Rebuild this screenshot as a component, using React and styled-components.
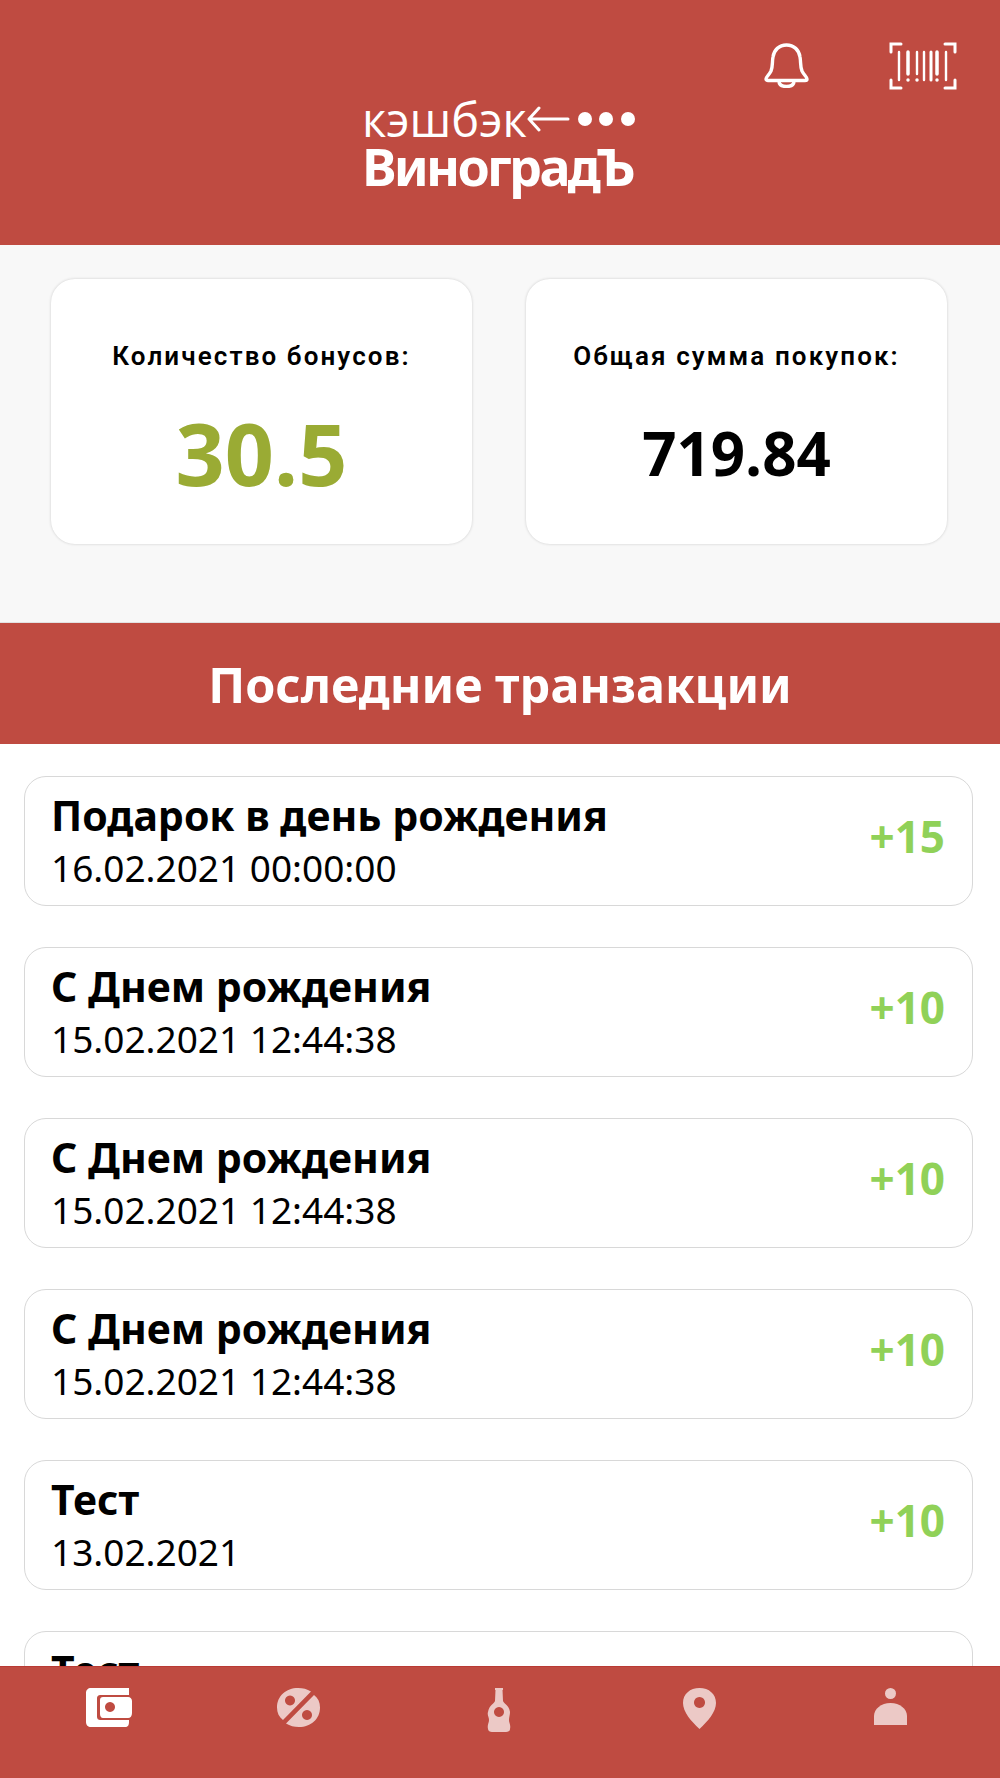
import React from "react";
import styled, { createGlobalStyle } from "styled-components";

const Global = createGlobalStyle`
  html, body { margin: 0; padding: 0; background: #fff; }
  * { box-sizing: border-box; }
`;

const Page = styled.div`
  width: 1000px;
  height: 1778px;
  display: flex;
  flex-direction: column;
  overflow: hidden;
  font-family: "Noto Sans", "Open Sans", sans-serif;
  color: #000;
`;

const Header = styled.header`
  height: 245px;
  flex: none;
  background: #bf4b41;
  display: flex;
  flex-direction: column;
`;

const HeaderActions = styled.div`
  display: flex;
  align-items: center;
  padding: 41px 43px 0 0;
  justify-content: flex-end;
  gap: 79px;
  height: 90px;
`;

const Logo = styled.div`
  width: 272px;
  margin: 9px 0 0 362px;
  color: #fff;
  display: flex;
  flex-direction: column;
`;

const LogoTop = styled.div`
  display: flex;
  align-items: center;
  height: 40px;
`;

const LogoThin = styled.span`
  font-family: "Open Sans", sans-serif;
  font-weight: 400;
  font-size: 47px;
  line-height: 40px;
`;

const ArrowSvg = styled.svg`
  flex: none;
  margin-left: 0;
`;

const LogoBold = styled.span`
  font-family: "Noto Sans", sans-serif;
  font-weight: 700;
  font-size: 52px;
  line-height: 54px;
  letter-spacing: -2.7px;
  white-space: nowrap;
`;

const Stats = styled.section`
  height: 378px;
  flex: none;
  background: #f8f8f8;
  padding: 34px 53px 0 51px;
  display: grid;
  grid-template-columns: 421px 421px;
  justify-content: space-between;
  align-items: start;
  border-bottom: 1px solid #e2e2e2;
`;

const StatCard = styled.div`
  height: 265px;
  background: #fff;
  border-radius: 24px;
  box-shadow: 0 0 3px rgba(0, 0, 0, 0.18);
  display: flex;
  flex-direction: column;
  align-items: center;
`;

const StatLabel = styled.div`
  font-family: "Roboto", sans-serif;
  font-weight: 600;
  font-size: 26px;
  letter-spacing: 2.1px;
  line-height: 30px;
  margin-top: 62px;
`;

const StatValue = styled.div`
  font-family: "Open Sans", sans-serif;
  font-weight: 700;
  line-height: 100px;
  margin-top: 32px;
  font-size: ${(p) => p.$size}px;
  color: ${(p) => p.$color};
`;

const Banner = styled.h2`
  height: 121px;
  flex: none;
  margin: 0;
  background: #bf4b41;
  color: #fff;
  display: flex;
  align-items: center;
  justify-content: center;
  font-family: "Noto Sans", sans-serif;
  font-weight: 700;
  font-size: 48.500px;
`;

const List = styled.main`
  flex: 1;
  min-height: 0;
  overflow: hidden;
  padding: 32px 27px 0 24px;
  display: flex;
  flex-direction: column;
  gap: 41px;
`;

const Row = styled.article`
  flex: none;
  height: 130px;
  border: 1px solid #d8d8d8;
  border-radius: 22px;
  background: #fff;
  padding: 0 27px 0 26px;
  display: flex;
  align-items: center;
  justify-content: space-between;
`;

const RowText = styled.div`
  display: flex;
  flex-direction: column;
  padding-top: 3px;
`;

const RowTitle = styled.div`
  font-weight: 700;
  font-size: 41px;
  line-height: 50px;
`;

const RowDate = styled.div`
  font-weight: 400;
  font-size: 37px;
  line-height: 56px;
`;

const Amount = styled.div`
  font-weight: 700;
  font-size: 44px;
  color: #90d158;
  margin-bottom: 10px;
`;

const Nav = styled.nav`
  height: 112px;
  flex: none;
  background: #bf4b41;
  border-top: 1px solid #b93a34;
  padding: 21px 0 0 14px;
  display: grid;
  grid-template-columns: 190px 188px 214px 186px 196px;
  align-items: start;
  justify-items: center;
`;

const NavIcon = styled.svg`
  display: block;
  fill: #fff;
  opacity: ${(p) => (p.$active ? 1 : 0.7)};
`;

const Bell = () => (
  <svg width="47" height="45" viewBox="0 0 47 45" fill="none" stroke="#fff" strokeWidth="3.4" strokeLinejoin="round" strokeLinecap="round">
    <path d="M3 36 c0 -2 3 -4 5 -8 c2 -5 1 -9 2 -14 c1 -7 6 -12 13.500 -12 s12.500 5 13.500 12 c1 5 0 9 2 14 c2 4 5 6 5 8 c0 1 -1 1.500 -2 1.500 h-37 c-1 0 -2 -.5 -2 -1.500z" />
    <path d="M16 38 c0 4 3.500 5.500 7.500 5.500 s7.500 -1.500 7.500 -5.500" />
  </svg>
);

const Scanner = () => (
  <svg width="68" height="50" viewBox="0 0 68 50" fill="none" stroke="#fff" strokeLinecap="round">
    <g strokeWidth="3">
      <path d="M2 11 V3 H12" />
      <path d="M56 3 H66 V11" />
      <path d="M2 39 V47 H12" />
      <path d="M56 47 H66 V39" />
    </g>
    <g strokeWidth="2.400">
      <path d="M10 11 V39" />
      <path d="M19 11 V33" strokeWidth="3.500" />
      <path d="M19 39 V39.100" strokeWidth="3.500" />
      <path d="M28 11 V33" />
      <path d="M28 39 V39.100" strokeWidth="3.500" />
      <path d="M35 11 V39" />
      <path d="M42 11 V39" strokeWidth="3" />
      <path d="M48 11 V33" strokeWidth="3.500" />
      <path d="M48 39 V39.100" strokeWidth="3.500" />
      <path d="M57 11 V39" />
    </g>
  </svg>
);

const ArrowDots = () => (
  <ArrowSvg width="109" height="30" viewBox="0 0 109 30" fill="none" stroke="#fff" strokeWidth="3" strokeLinecap="round" strokeLinejoin="round">
    <path d="M12 4 L2 15 L12 26 M2 15 H41" />
    <g fill="#fff" stroke="none">
      <circle cx="58" cy="15" r="7" />
      <circle cx="79" cy="15" r="7" />
      <circle cx="101" cy="15" r="7" />
    </g>
  </ArrowSvg>
);

const WalletIcon = () => (
  <NavIcon $active width="46" height="39" viewBox="0 0 46 39">
    <path fillRule="evenodd" d="M5 0 H43 V7 H15 C12 7 11 8 11 11 V28 C11 31 12 32 15 32 H43 V34 C43 37 42 39 39 39 H5 C2 39 0 37 0 34 V5 C0 2 2 0 5 0 Z M17 9 H42 C44.500 9 46 11 46 13 V25 C46 28 44.500 30 42 30 H17 C15 30 14 28 14 26 V12 C14 10 15 9 17 9 Z M24 14 a5 5 0 1 0 0.010 0 Z" />
  </NavIcon>
);

const PercentIcon = () => (
  <NavIcon width="43" height="39" viewBox="0 0 43 39">
    <path fillRule="evenodd" d="M21 0 C26 0 30 1 34 3.500 L6 32 C2 29 0 25 0 19.500 C0 8 9 0 21 0 Z M13 7.500 a5 5 0 1 0 0.010 0 Z" />
    <path fillRule="evenodd" d="M37 7 C41 10 43 14 43 19.500 C43 31 34 39 22 39 C17 39 13 38 9 35.500 Z M30 22 a5 5 0 1 0 0.010 0 Z" />
  </NavIcon>
);

const BottleIcon = () => (
  <NavIcon width="24" height="44" viewBox="0 0 24 44">
    <path fillRule="evenodd" d="M8 0 H16 V2 H15.500 L16 13 C17 16 22 17 23 24 C23 27 22 29 22 32 C22 35 24 37 23 41 C23 43 21 44 19 44 H5 C3 44 1 43 1 41 C0 37 2 35 2 32 C2 29 0 27 1 24 C2 17 7 16 8 13 L8.500 2 H8 Z M12 19 a5 5 0 1 0 0.010 0 Z" />
  </NavIcon>
);

const PinIcon = () => (
  <NavIcon width="33" height="41" viewBox="0 0 33 41">
    <path fillRule="evenodd" d="M16.500 0 C26 0 33 6 33 15 C33 24 25 33 16.500 41 C8 33 0 24 0 15 C0 6 7 0 16.500 0 Z M16.500 9 a5.500 5.500 0 1 0 0.010 0 Z" />
  </NavIcon>
);

const PersonIcon = () => (
  <NavIcon width="33" height="37" viewBox="0 0 33 37">
    <ellipse cx="16.500" cy="5.500" rx="5.500" ry="5.500" />
    <path d="M0 37 V28 C0 21 7 15 16.500 15 C26 15 33 21 33 28 V37 Z" />
  </NavIcon>
);

const rows = [
  { title: "Подарок в день рождения", date: "16.02.2021 00:00:00", amount: "+15" },
  { title: "С Днем рождения", date: "15.02.2021 12:44:38", amount: "+10" },
  { title: "С Днем рождения", date: "15.02.2021 12:44:38", amount: "+10" },
  { title: "С Днем рождения", date: "15.02.2021 12:44:38", amount: "+10" },
  { title: "Тест", date: "13.02.2021", amount: "+10" },
  { title: "Тест", date: "13.02.2021", amount: "+10" },
];

export default function App() {
  return (
    <Page>
      <Global />
      <Header>
        <HeaderActions>
          <Bell />
          <Scanner />
        </HeaderActions>
        <Logo>
          <LogoTop>
            <LogoThin>кэшбэк</LogoThin>
            <ArrowDots />
          </LogoTop>
          <LogoBold>ВиноградЪ</LogoBold>
        </Logo>
      </Header>
      <Stats>
        <StatCard>
          <StatLabel>Количество бонусов:</StatLabel>
          <StatValue $size={86} $color="#9aab34">30.5</StatValue>
        </StatCard>
        <StatCard>
          <StatLabel>Общая сумма покупок:</StatLabel>
          <StatValue $size={60} $color="#000">719.84</StatValue>
        </StatCard>
      </Stats>
      <Banner>Последние транзакции</Banner>
      <List>
        {rows.map((r, i) => (
          <Row key={i}>
            <RowText>
              <RowTitle>{r.title}</RowTitle>
              <RowDate>{r.date}</RowDate>
            </RowText>
            <Amount>{r.amount}</Amount>
          </Row>
        ))}
      </List>
      <Nav>
        <WalletIcon />
        <PercentIcon />
        <BottleIcon />
        <PinIcon />
        <PersonIcon />
      </Nav>
    </Page>
  );
}
